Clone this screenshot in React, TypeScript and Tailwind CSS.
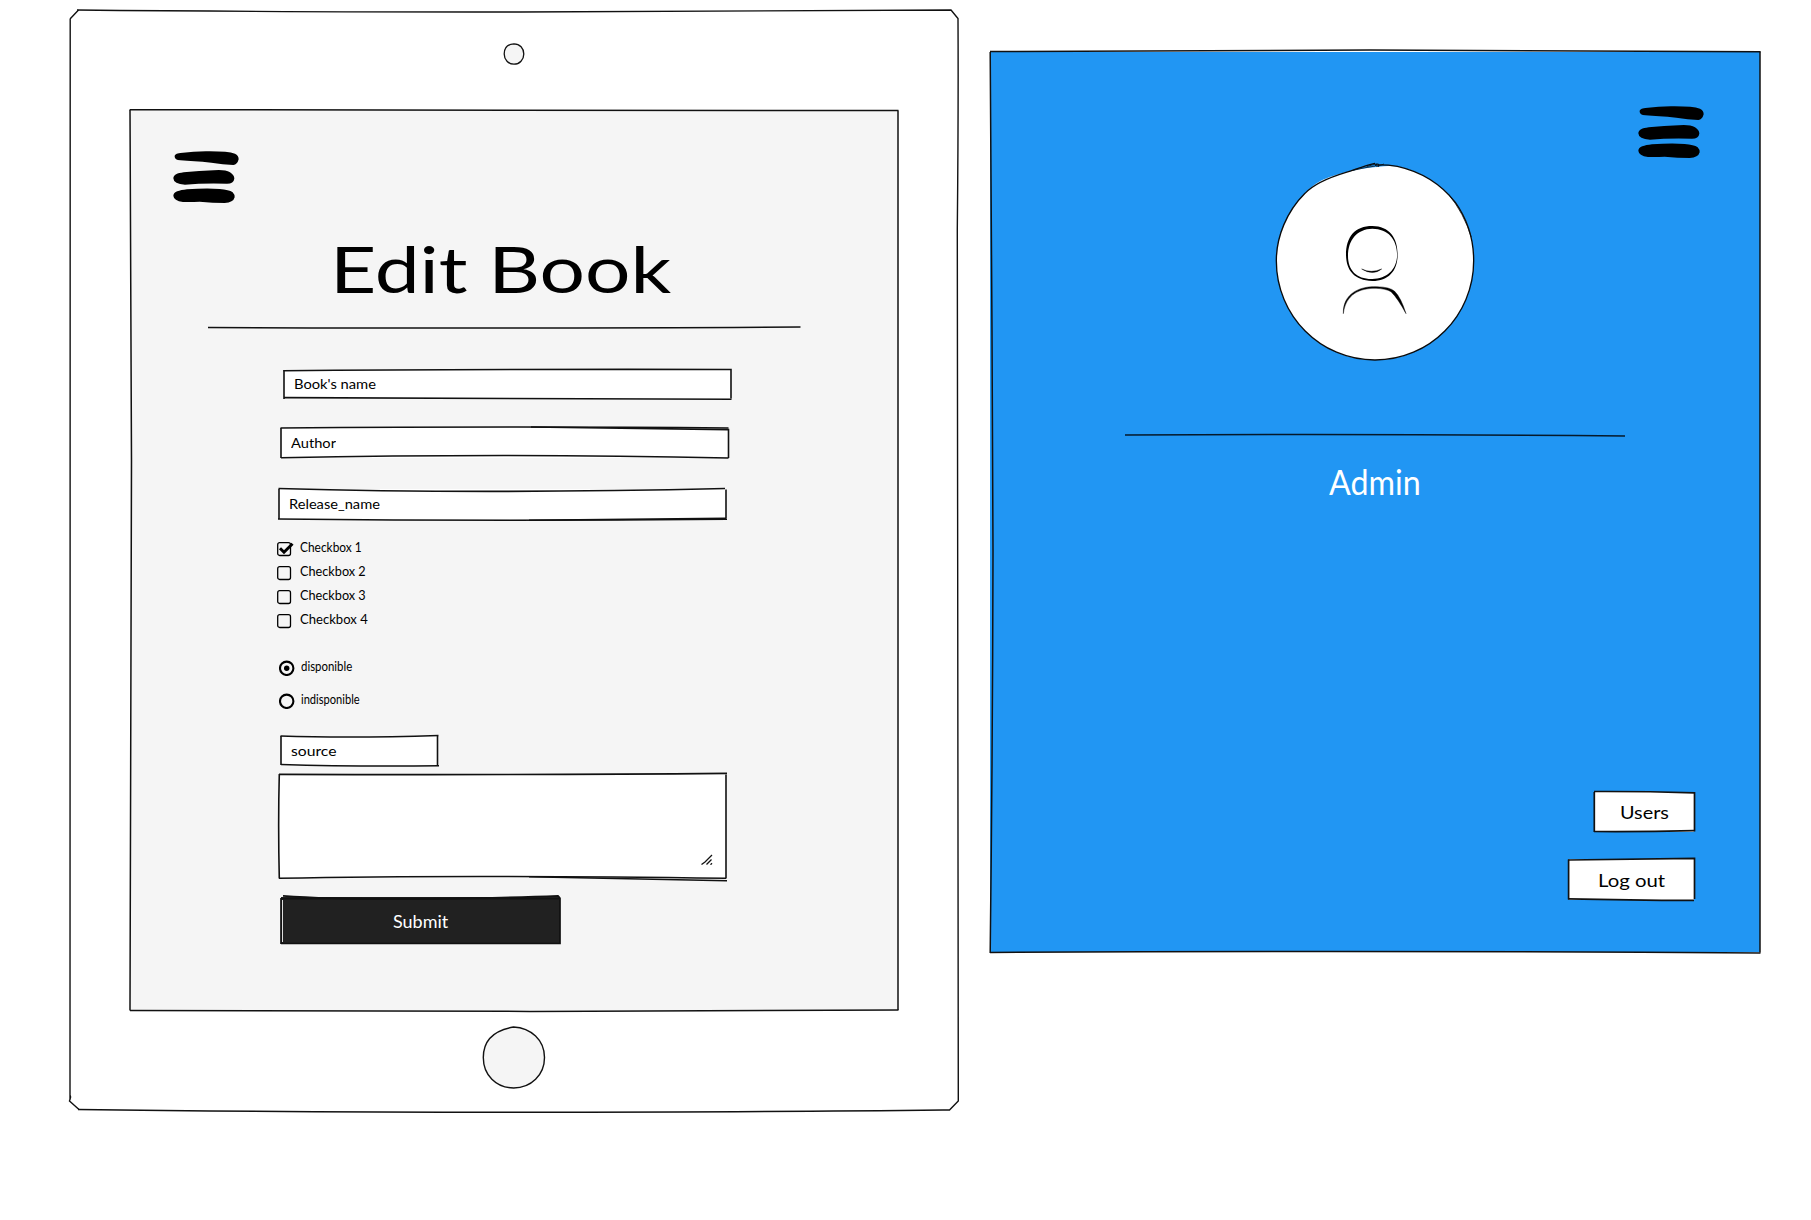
import { useLayoutEffect, useRef, useState, type ReactNode } from "react";

/* Text stretched horizontally so that its run has a given width. */
function Lettering({ width, className = "", children }: { width: number; className?: string; children: ReactNode }) {
  const ref = useRef<HTMLSpanElement>(null);
  const [scale, setScale] = useState(1);
  useLayoutEffect(() => {
    if (ref.current) setScale(width / ref.current.offsetWidth);
  }, [width]);
  return (
    <span className="block shrink-0 whitespace-nowrap text-left leading-none" style={{ width }}>
      <span
        ref={ref}
        className={`inline-block origin-left align-top leading-none ${className}`}
        style={{ transform: `scaleX(${scale})` }}
      >
        {children}
      </span>
    </span>
  );
}

/* Hand-drawn outline laid over a box; the paths use the box's own pixels. */
function Outline({ paths, weight = 1.5 }: { paths: string[]; weight?: number }) {
  return (
    <svg className="pointer-events-none absolute inset-0 h-full w-full overflow-visible" fill="none" stroke="#111" strokeWidth={weight}>
      {paths.map((d) => (
        <path key={d} d={d} />
      ))}
    </svg>
  );
}

function MenuIcon() {
  return (
    <svg className="block h-[52px] w-[66px]" viewBox="340 453 198 156">
      <path d="M345 470C345 463 350 461 362 459Q410 453 450 454Q505 454 526 461Q537 466 537 478Q533 494 521 495Q490 493 455 488Q400 483 362 481Q345 479 345 470Z" />
      <path d="M341 535C342 524 352 520 372 517Q420 513 462 511Q495 508 511 517Q524 525 524 536Q522 551 502 551Q430 549 376 554Q342 553 341 535Z" />
      <path d="M341 587C342 575 358 571 382 568Q440 564 480 567Q508 569 519 577Q525 583 525 592Q521 608 495 609Q460 609 420 605Q395 607 370 606Q342 602 341 587Z" />
    </svg>
  );
}

function Avatar() {
  return (
    <svg className="block h-[198px] w-[200px] overflow-visible" viewBox="45 39 600 594">
      <path
        fill="#fff"
        d="M180 94C225 70 310 52 385 48L412 49C470 62 535 92 586 157C622 208 641 262 641 332C641 497 509 630 345 630C181 630 49 497 49 332C49 260 80 185 135 130C148 116 163 104 180 94Z"
      />
      <g fill="none" stroke="#0a0a0a" strokeWidth="4">
        <path d="M345 40C310 48 290 57 258 67C215 80 165 98 135 130C80 185 49 260 49 332C49 497 181 630 345 630C509 630 641 497 641 332C641 262 622 208 586 157C535 92 470 62 412 49Q380 44 345 45" />
        <path strokeWidth="2.2" d="M275 62Q315 52 346 48L352 41Q335 45 320 50M349 50L372 42M355 41L356 51M565 132Q612 190 634 262" />
      </g>
      <g stroke="#000" strokeWidth="1.3">
        <path d="M258 315C258 260 285 228 337 228C388 229 413 262 413 315C412 364 385 393 337 393C283 391 259 362 258 315ZM264 318C264 362 291 388 337 387C380 386 410 360 411.5 315C410 266 385 237 337 236C291 237 264 270 264 318Z" fillRule="evenodd" stroke="none" />
        <path d="M305 357Q333 371 365 357Q339 378 305 357ZM250 491C248 430 300 408 350 410Q390 411 404 424Q423 443 438 491Q414 446 393 425Q377 416 348 415C300 414 257 432 250 491Z" />
      </g>
    </svg>
  );
}

function Field({ label, width, textWidth, height, outline, className }: {
  label: string;
  width: string;
  textWidth: number;
  height: string;
  outline: string[];
  className: string;
}) {
  return (
    <div className={`relative flex items-center bg-white pt-px pl-[10px] ${width} ${height} ${className}`}>
      <Outline paths={outline} weight={1.6} />
      <Lettering width={textWidth} className="text-sm leading-none">{label}</Lettering>
    </div>
  );
}

function Checkbox({ label, width, checked = false }: { label: string; width: number; checked?: boolean }) {
  return (
    <div className="flex h-[14px] items-start gap-[9px]">
      <svg className="h-[14px] w-[14px] overflow-visible" fill="none" stroke="#000">
        <rect x="0.7" y="0.7" width="12.8" height="12.8" rx="2" strokeWidth="1.3" />
        {checked && <path d="M3 6.2L7 10.2L15.5 1.7" strokeWidth="3" />}
      </svg>
      <Lettering width={width} className="text-[12.5px] leading-none">{label}</Lettering>
    </div>
  );
}

function Radio({ label, width, checked = false }: { label: string; width: number; checked?: boolean }) {
  return (
    <div className="flex h-4 items-start gap-[6px]">
      <svg className="h-4 w-4" fill="none" stroke="#000">
        <circle cx="7.7" cy="8.3" r="6.7" strokeWidth="2.1" />
        {checked && <circle cx="7.7" cy="8.3" r="2.7" fill="#000" stroke="none" />}
      </svg>
      <Lettering width={width} className="text-[13px] leading-none">{label}</Lettering>
    </div>
  );
}

function Tablet() {
  return (
    <div className="relative mt-[10px] flex h-[1101px] w-[888px] flex-col items-center">
      <Outline
        weight={1.4}
        paths={[
          "M0.2 9L0 1090M0 1085L.6 1087L-0.5 1091L9 1099.5M0 9L8.5 0",
          "M7 0Q200 2 450 2Q700 1.5 881 0L888 8.5Q888.5 100 887.3 220Q887 650 888.3 1091L879.5 1100H873",
          "M8 1099.5Q200 1102 450 1102.3Q700 1102 873 1100",
        ]}
      />
      <svg className="mt-[33px] block h-[22px] w-[22px]" fill="#f5f5f5" stroke="#111" strokeWidth="1.3">
        <path d="M11 .8C16.8 .8 20.8 5.4 20.8 11C20.8 16.6 16.6 21.2 11 21.2C5.4 21.2 1.2 16.6 1.2 11C1.2 4.8 5 1.2 11 .8Z" />
      </svg>

      <div className="relative mt-[45px] h-[900px] w-[768px] bg-[#f5f5f5]">
        <Outline
          weight={1.5}
          paths={["M-.4 -.3Q400 -.5 768.5 .6M768 .5L768 900", "M0 0Q1.2 180 1.5 350Q1.4 700 0 900.5", "M0 900.4Q200 901.4 400 901.4Q650 901 768.5 900"]}
        />
        <div className="ml-[43.4px] pt-[41px]"><MenuIcon /></div>
        <h1 className="mt-[34px] ml-[200px]">
          <Lettering width={341} className="text-[64px] leading-none">Edit Book</Lettering>
        </h1>
        <svg className="mt-[25px] ml-[78px] block h-1 w-[592px] overflow-visible" fill="none" stroke="#111" strokeWidth="1.5">
          <path d="M0 1.5Q350 2.6 592.5 1" />
        </svg>

        <Field label="Book's name" width="w-[447px]" textWidth={82} height="h-[29px]" className="mt-10 ml-[154px]"
          outline={["M0 0V29", "M-.5 .7Q180 -.9 447 -.5V28.5", "M0 27.6Q200 28.2 447.5 29.3"]} />
        <Field label="Author" width="w-[447px]" textWidth={45} height="h-[30px]" className="mt-[29px] ml-[151px]"
          outline={["M0 0V30", "M-.5 0Q250 -2 447.5 0", "M250 -1L447.5 1.6V30", "M0 29.8Q230 25 447.5 30"]} />
        <Field label="Release_name" width="w-[447px]" textWidth={91} height="h-[30px]" className="mt-[31px] ml-[149px]"
          outline={["M0 0V30", "M-.5 -.5Q200 5.2 446 -.5", "M447 .5V29.5", "M-1 30Q220 32.3 448 30.2", "M250 31.2L447 29.2"]} />

        <div className="mt-[23px] ml-[147px] flex flex-col gap-[10px]">
          <Checkbox label="Checkbox 1" width={62} checked />
          <Checkbox label="Checkbox 2" width={66} />
          <Checkbox label="Checkbox 3" width={66} />
          <Checkbox label="Checkbox 4" width={68} />
        </div>

        <div className="mt-8 ml-[149px] flex flex-col gap-[17px]">
          <Radio label="disponible" width={51} checked />
          <Radio label="indisponible" width={59} />
        </div>

        <Field label="source" width="w-[157px]" textWidth={46} height="h-[30px]" className="mt-[27px] ml-[151px]"
          outline={["M0 0V29", "M-.5 0Q70 2.3 157.5 -.5", "M156.5 0V30", "M0 28.5Q70 30.7 158 29.8"]} />

        <div className="relative mt-2 ml-[149px] flex h-[104px] w-[447px] items-end justify-end bg-white pr-[13px] pb-[13px]">
          <Outline weight={1.6} paths={["M.3 0Q-1 50 .3 104.5", "M0 .4Q250 1.2 448 -.6", "M447 .5V104.5", "M0 104.3Q180 100.7 447 104.3", "M250 102.8L448 106.7"]} />
          <svg className="h-[11px] w-[12px]" fill="none" stroke="#111" strokeWidth="1.3">
            <path d="M.5 10.5L4 8L11 1M5.5 10.5L10.5 5.5M9.5 10.7L11 9.2" />
          </svg>
        </div>

        <button className="relative mt-[19px] ml-[151px] flex h-[46px] w-[279px] items-center justify-center bg-[#212121] pt-[2px] text-white">
          <Outline weight={1.7} paths={["M0 1V47", "M0 1.7H279V46.5H0", "M2 -1.2Q50 2.5 150 1.8Q230 .8 277 -1.2L279 1"]} />
          <span className="absolute top-[3px] left-[1.4px] h-[42px] w-px bg-[#ddd]" />
          <Lettering width={55} className="text-[17px] leading-none">Submit</Lettering>
        </button>
      </div>

      <svg className="mt-4 block h-[64px] w-[64px] overflow-visible" fill="#f5f5f5" stroke="#111" strokeWidth="1.4">
        <path d="M31.5 1C49 2 62.5 14 62.5 31.5C62.5 49 49 62 31.7 62C14 62 1.3 49 1.3 31.5C1.3 13 14 4 31.5 1Z" />
      </svg>
    </div>
  );
}

function ProfilePanel() {
  return (
    <div className="relative mt-[52px] flex h-[900px] w-[770px] flex-col bg-[#2196f3]">
      <Outline
        weight={1.5}
        paths={["M0 -.4Q150 -1.6 380 -2Q600 -1.5 770.5 -.3", "M.2 0Q.6 130 2 280Q3 400 3 500Q2.6 700 .2 901", "M770 -.5V900.5", "M0 900.5Q380 898.4 770.5 901"]}
      />
      <div className="flex justify-end pt-[54px] pr-[55.6px]"><MenuIcon /></div>
      <div className="mt-[5px] flex justify-center"><Avatar /></div>
      <svg className="mx-auto mt-[72px] block h-1 w-[500px] shrink-0 overflow-visible" fill="none" stroke="#06192a" strokeWidth="1.5">
        <path d="M0 2Q250 .7 500 3" />
      </svg>
      <div className="mt-[28px] flex justify-center text-white">
        <Lettering width={92} className="text-[34px] leading-none">Admin</Lettering>
      </div>
      <div className="mt-[293px] mr-[66px] flex flex-col items-end gap-[27px]">
        <button className="relative flex h-10 w-[100px] items-center justify-center bg-white pt-px">
          <Outline weight={1.7} paths={["M.3 0V40", "M0 -.5Q50 -.7 100.5 .8V39.5", "M0 39.5Q50 39.8 100 38.7"]} />
          <Lettering width={49} className="text-[17px] leading-none">Users</Lettering>
        </button>
        <button className="relative flex h-[41px] w-[126px] items-center justify-center bg-white pt-px">
          <Outline weight={1.7} paths={["M.6 .5V40.5", "M0 1Q60 .2 126.5 -.6V40", "M0 39.8Q60 41.2 126 41.4"]} />
          <Lettering width={67} className="text-[17px] leading-none">Log out</Lettering>
        </button>
      </div>
    </div>
  );
}

export default function App() {
  return (
    <main className="flex h-[1220px] w-[1811px] items-start gap-8 overflow-hidden bg-white pl-[70px] font-['Lato',sans-serif] text-black">
      <Tablet />
      <ProfilePanel />
    </main>
  );
}
